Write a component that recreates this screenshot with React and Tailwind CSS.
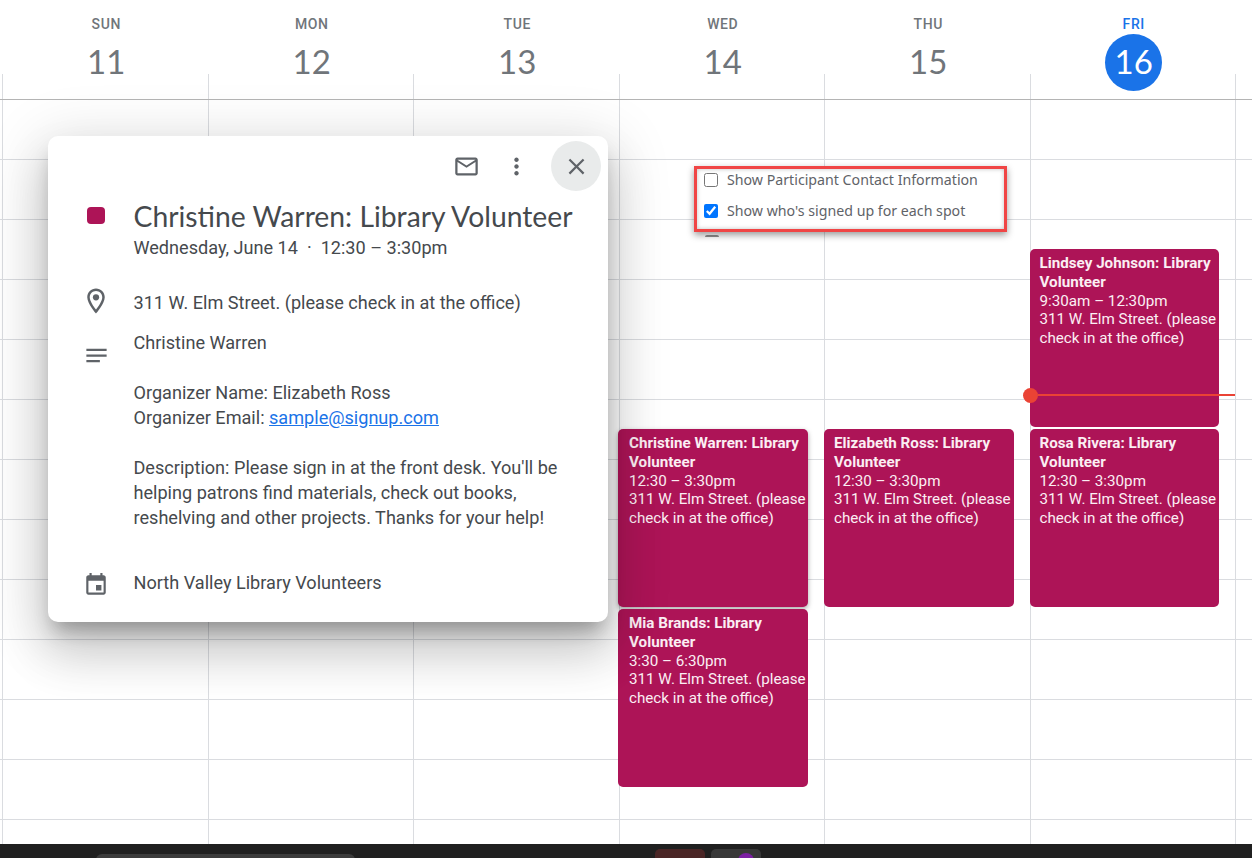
const days = [
  { name: 'SUN', num: '11' },
  { name: 'MON', num: '12' },
  { name: 'TUE', num: '13' },
  { name: 'WED', num: '14' },
  { name: 'THU', num: '15' },
  { name: 'FRI', num: '16', today: true },
];

const columns = [
  [],
  [],
  [],
  [
    { title: 'Christine Warren: Library Volunteer', time: '12:30 – 3:30pm', top: 'top-[329px]', place: '-left-[1px] w-[190px] pl-[11.5px]', raised: true },
    { title: 'Mia Brands: Library Volunteer', time: '3:30 – 6:30pm', top: 'top-[509px]', place: '-left-[1px] w-[190px] pl-[11.5px]' },
  ],
  [{ title: 'Elizabeth Ross: Library Volunteer', time: '12:30 – 3:30pm', top: 'top-[329px]', place: 'left-0 w-[190px] pl-[10px]' }],
  [
    { title: 'Lindsey Johnson: Library Volunteer', time: '9:30am – 12:30pm', top: 'top-[149px]', place: 'left-0 w-[189px] pl-[10px]' },
    { title: 'Rosa Rivera: Library Volunteer', time: '12:30 – 3:30pm', top: 'top-[329px]', place: 'left-0 w-[189px] pl-[10px]' },
  ],
];

const cols = 'grid grid-cols-[repeat(6,205.5px)] ml-[2px]';
const display = "font-['Lato',sans-serif]";

function Icon({ d, className, children }) {
  return (
    <svg viewBox="0 0 24 24" className={className} fill="currentColor">
      <path d={d} />
      {children}
    </svg>
  );
}

function EventCard({ event }) {
  return (
    <div className={`absolute ${event.place} h-[178px] ${event.top} rounded-[5px] bg-[#ad1457] pt-[5px] text-[15.2px] leading-[18.75px] text-[#fbeef3] ${event.raised ? 'shadow-[0_2px_5px_rgba(0,0,0,0.35)]' : ''}`}>
      <div className="font-bold">{event.title}</div>
      <div>{event.time}</div>
      <div className="whitespace-nowrap">311 W. Elm Street. (please</div>
      <div>check in at the office)</div>
    </div>
  );
}

function DetailRow({ icon, children, className = '' }) {
  return (
    <div className={`flex ${className}`}>
      <div className="w-[85.5px] pl-[33px] shrink-0 text-[#5f6368]">
        <div className="w-[30px] flex justify-center">{icon}</div>
      </div>
      <div className="flex-1">{children}</div>
    </div>
  );
}

function EventPopup() {
  return (
    <div className="absolute left-[48px] top-[136px] w-[560px] h-[486px] z-20 rounded-[10px] bg-white text-[18.1px] leading-[25px] text-[#45494d] shadow-[0_30px_48px_4px_rgba(0,0,0,0.14),0_11px_58px_10px_rgba(0,0,0,0.12),0_14px_19px_-6px_rgba(0,0,0,0.28)]">
      <div className="flex items-center justify-end h-[50px] mt-[5px] pr-[7px]">
        <Icon className="w-[27px] h-[27px] text-[#5f6368] mr-[23px]" d="M20 4H4c-1.1 0-2 .9-2 2v12c0 1.1.9 2 2 2h16c1.1 0 2-.9 2-2V6c0-1.1-.9-2-2-2zm0 14H4V8l8 5 8-5v10zm-8-7L4 6h16l-8 5z" />
        <Icon className="w-[27px] h-[27px] text-[#5f6368] mr-[21px]" d="M12 8c1.1 0 2-.9 2-2s-.9-2-2-2-2 .9-2 2 .9 2 2 2zm0 2c-1.1 0-2 .9-2 2s.9 2 2 2 2-.9 2-2-.9-2-2-2zm0 6c-1.1 0-2 .9-2 2s.9 2 2 2 2-.9 2-2-.9-2-2-2z" />
        <div className="w-[50px] h-[50px] rounded-full bg-[#e9ebeb] flex items-center justify-center">
          <Icon className="w-[27px] h-[27px] text-[#5f6368]" d="M19 6.41L17.59 5 12 10.59 6.41 5 5 6.41 10.59 12 5 17.59 6.41 19 12 13.41 17.59 19 19 17.59 13.41 12z" />
        </div>
      </div>
      <DetailRow
        className="mt-[6px]"
        icon={<div className="w-[18px] h-[17px] mt-[10px] rounded-[4px] bg-[#ad1457]" />}
      >
        <div className={`${display} text-[28.3px] leading-[38px] whitespace-nowrap`}>Christine Warren: Library Volunteer</div>
        <div className="whitespace-nowrap">Wednesday, June 14 &nbsp;·&nbsp; 12:30 – 3:30pm</div>
      </DetailRow>
      <DetailRow
        className="mt-[30px]"
        icon={
          <Icon className="w-[30px] h-[30px] -mt-[4px]" d="M12 2C8.13 2 5 5.13 5 9c0 5.25 7 13 7 13s7-7.75 7-13c0-3.87-3.13-7-7-7zM7 9c0-2.76 2.24-5 5-5s5 2.24 5 5c0 2.88-2.88 7.19-5 9.88C9.92 16.21 7 11.85 7 9z">
            <circle cx="12" cy="9" r="2.5" />
          </Icon>
        }
      >
        311 W. Elm Street. (please check in at the office)
      </DetailRow>
      <DetailRow
        className="mt-[14px]"
        icon={<Icon className="w-[27px] h-[27px] mt-[12px]" d="M3 18h12v-2H3v2zM3 6v2h18V6H3zm0 7h18v-2H3v2z" />}
      >
        <div>Christine Warren</div>
        <div className="mt-[25px]">Organizer Name: Elizabeth Ross</div>
        <div>
          Organizer Email: <span className="text-[#1a73e8] underline">sample@signup.com</span>
        </div>
        <div className="mt-[25px] w-[440px]">
          Description: Please sign in at the front desk. You'll be helping patrons find materials, check out books, reshelving and other projects. Thanks for your help!
        </div>
      </DetailRow>
      <DetailRow
        className="mt-[40px]"
        icon={<Icon className="w-[26px] h-[26px] mt-[2px]" d="M17 12h-5v5h5v-5zM16 1v2H8V1H6v2H5c-1.11 0-1.99.9-1.99 2L3 19c0 1.1.89 2 2 2h14c1.1 0 2-.9 2-2V5c0-1.1-.9-2-2-2h-1V1h-2zm3 18H5V8h14v11z" />}
      >
        North Valley Library Volunteers
      </DetailRow>
    </div>
  );
}

function OptionsCallout() {
  return (
    <>
      <div className="absolute left-[694px] top-[166px] w-[313px] h-[66px] z-10 border-[3px] border-[#f04545] bg-white shadow-[0_3px_7px_rgba(0,0,0,0.4),inset_0_0_4px_rgba(0,0,0,0.25)] font-['Noto_Sans',sans-serif] text-[14.2px] text-[#5f6368]">
        <label className="flex items-center h-[14px] mt-[4px] ml-[7px] gap-[9px] whitespace-nowrap">
          <input type="checkbox" className="w-[14px] h-[14px] m-0" />
          Show Participant Contact Information
        </label>
        <label className="flex items-center h-[14px] mt-[17px] ml-[7px] gap-[9px] whitespace-nowrap">
          <input type="checkbox" defaultChecked className="w-[14px] h-[14px] m-0 accent-[#0075ff]" />
          Show who's signed up for each spot
        </label>
      </div>
      <div className="absolute left-[705px] top-[235px] w-[14px] h-[3px] border-t-2 border-[#8f8f8f] rounded-t-[2px]" />
    </>
  );
}

export default function App() {
  return (
    <div className="relative w-[1252px] h-[858px] overflow-hidden bg-white font-['Roboto',sans-serif]">
      <header className="h-[100px] border-b border-[#b4b4b4]">
        <div className="grid grid-cols-[repeat(6,205.5px)] ml-[3px] h-[74px]">
          {days.map((day) => (
            <div key={day.name} className="flex flex-col items-center">
              <div className={`mt-[16px] pl-[1px] text-[14px] leading-[16px] font-medium tracking-[0.6px] ${day.today ? 'text-[#1a73e8]' : 'text-[#70757a]'}`}>
                {day.name}
              </div>
              <div className={`${display} shrink-0 w-[57px] h-[57px] mt-[2px] pl-[1px] pb-[2px] rounded-full flex items-center justify-center text-[33px] leading-none ${day.today ? 'bg-[#1a73e8] text-white' : 'text-[#70757a]'}`}>
                {day.num}
              </div>
            </div>
          ))}
        </div>
        <div className={`${cols} h-[25px]`}>
          {days.map((day) => (
            <div key={day.name} className={`border-l border-[#dadce0] ${day.today ? 'border-r w-[206.5px]' : ''}`} />
          ))}
        </div>
      </header>

      <main className="relative h-[744px]">
        {Array.from({ length: 13 }).map((_, row) => (
          <div key={row} className="h-[60px] border-b border-[#dadce0]">
            <div className={`${cols} h-full`}>
              {days.map((day) => (
                <div key={day.name} className={`border-l border-[#dadce0] ${day.today ? 'border-r w-[206.5px]' : ''}`} />
              ))}
            </div>
          </div>
        ))}

        <div className={`${cols} absolute left-0 top-0`}>
          {columns.map((events, i) => (
            <div key={i} className="relative">
              {events.map((event) => (
                <EventCard key={event.title} event={event} />
              ))}
            </div>
          ))}
        </div>

        {/* now line */}
        <div className="absolute left-[1023px] top-[288px] w-[212px] h-[15px] flex items-center">
          <div className="w-[15px] h-[15px] rounded-full bg-[#ea4335] shrink-0" />
          <div className="flex-1 h-[2px] -mt-[1px] bg-[#ea4335]" />
        </div>
      </main>

      <EventPopup />
      <OptionsCallout />

      <footer className="absolute inset-x-0 bottom-0 h-[14px] bg-[#202020] overflow-hidden">
        <div className="absolute left-[96px] top-[10px] w-[259px] h-[20px] rounded-t-[6px] bg-[#3c3c3c]" />
        <div className="absolute left-[655px] top-[5px] w-[50px] h-[20px] rounded-t-[5px] bg-[#4a2626]" />
        <div className="absolute left-[711px] top-[5px] w-[50px] h-[20px] rounded-t-[5px] bg-[#383838]">
          <div className="w-[16px] h-[16px] rounded-full bg-[#7b1fa2] mt-[4px] ml-[27px]" />
        </div>
      </footer>
    </div>
  );
}
